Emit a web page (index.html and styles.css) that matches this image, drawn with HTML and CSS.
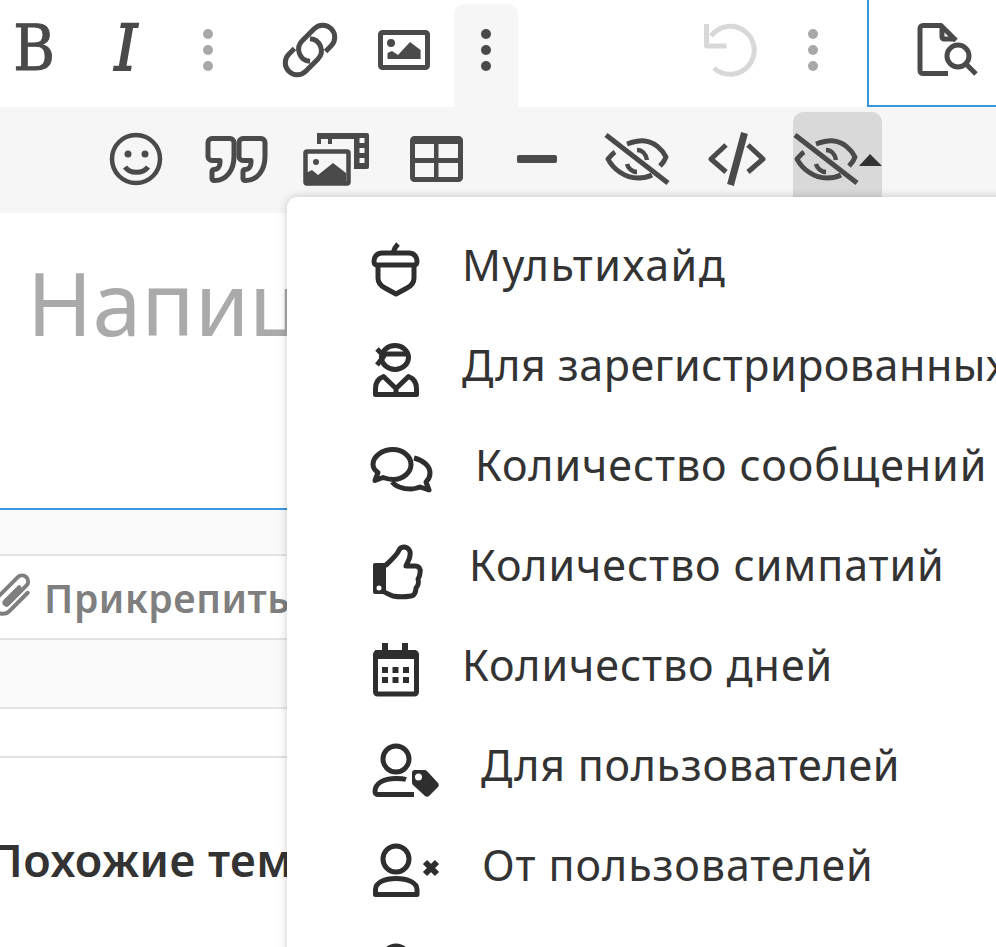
FILE: index.html
```html
<!DOCTYPE html>
<html lang="ru">
<head>
<meta charset="utf-8">
<title>Редактор</title>
<link rel="stylesheet" href="styles.css">
</head>
<body>

<div class="toolbar">
	<div class="tb tb-b"><span class="bold">B</span></div>
	<div class="tb tb-i"><span class="ital">I</span></div>
	<div class="tb tb-more1">
		<svg viewBox="177 18 64 64"><g class="dots"><circle cx="209" cy="34" r="5"/><circle cx="209" cy="50" r="5"/><circle cx="209" cy="66" r="5"/></g></svg>
	</div>
	<div class="tb tb-link">
		<svg viewBox="278 18 64 64"><g class="ln" transform="rotate(-45 310 50)"><path d="M300 38h-8a12 12 0 0 0 0 24h17a12 12 0 0 0 9-20"/><path d="M320 62h8a12 12 0 0 0 0-24h-17a12 12 0 0 0-9 20"/></g></svg>
	</div>
	<div class="tb tb-img">
		<svg viewBox="372 18 64 64"><rect class="ln" x="380.500" y="32.500" width="47" height="35" rx="2"/><circle class="fl" cx="391" cy="43" r="4"/><path class="fl" d="M387.500 59v-6l4.500-2 6 4 12-13 10.600 8v9z"/></svg>
	</div>
	<div class="tb tb-active">
		<svg viewBox="454 14 64 64"><g class="fl"><circle cx="486" cy="34" r="5"/><circle cx="486" cy="50" r="5"/><circle cx="486" cy="66" r="5"/></g></svg>
	</div>
	<div class="tb tb-undo">
		<svg viewBox="698 18 64 64"><g class="ln undo"><path d="M711 36A24 24 0 1 1 714 68"/><path d="M706.500 24v22h20" /></g></svg>
	</div>
	<div class="tb tb-more2">
		<svg viewBox="781 18 64 64"><g class="dots"><circle cx="813" cy="34" r="5"/><circle cx="813" cy="50" r="5"/><circle cx="813" cy="66" r="5"/></g></svg>
	</div>
	<div class="preview">
		<svg viewBox="909 18 76 64"><g class="ln"><path d="M948 73.500h-25a3 3 0 0 1-3-3v-42a3 3 0 0 1 3-3h18l15 15"/><path d="M942 26v11a2 2 0 0 0 2 2h11"/><circle cx="958" cy="56" r="11"/><path d="M966 64l10 10"/></g></svg>
	</div>
</div>

<div class="toolbar2">
	<div class="tb2">
		<svg viewBox="104 126 64 64"><circle class="ln thin" cx="136" cy="159" r="24"/><circle class="fl" cx="128" cy="154" r="3.500"/><circle class="fl" cx="145" cy="154" r="3.500"/><path class="ln" d="M125 167c5 7 18 7 23 0"/></svg>
	</div>
	<div class="tb2">
		<svg viewBox="204 126 64 64"><g class="ln"><path d="M212 138.500h18a4 4 0 0 1 4 4v14c0 14-8 24-19 24h-1a2 2 0 0 1-2-2v-7a2 2 0 0 1 2-2c4 0 6-3 6-7v-2h-8a4 4 0 0 1-4-4v-14a4 4 0 0 1 4-4z"/><path d="M243 138.500h18a4 4 0 0 1 4 4v14c0 14-8 24-19 24h-1a2 2 0 0 1-2-2v-7a2 2 0 0 1 2-2c4 0 6-3 6-7v-2h-8a4 4 0 0 1-4-4v-14a4 4 0 0 1 4-4z"/></g></svg>
	</div>
	<div class="tb2">
		<svg viewBox="304 126 64 64" class="over"><rect class="ln thin" x="305.500" y="151.500" width="43" height="32" rx="1.500"/><circle class="fl" cx="316" cy="162" r="3"/><path class="fl" d="M306 173l6-3 6 5 15-12 13 10v11h-40z"/><path class="fl" d="M317 133h50a2 2 0 0 1 2 2v32a2 2 0 0 1-2 2h-13v-4h0V139h-22v5h-4v-5h-7v5h-4z"/><path class="hole" d="M359.500 138h5v5h-5zM359.500 148h5v5h-5zM359.500 158h5v5h-5z"/></svg>
	</div>
	<div class="tb2">
		<svg viewBox="404 126 64 64"><rect class="ln" x="412.500" y="138.500" width="48" height="41" rx="2"/><path class="fl" d="M412 138h49v6h-49zM412 158h49v5h-49zM434 140h4.500v40H434z"/></svg>
	</div>
	<div class="tb2">
		<svg viewBox="504 126 64 64"><rect class="fl" x="517" y="155" width="40" height="8" rx="2"/></svg>
	</div>
	<div class="tb2">
		<svg viewBox="604 126 64 64" class="over"><use href="#eye"/></svg>
	</div>
	<div class="tb2">
		<svg viewBox="704 126 64 64"><path class="ln" d="M726 145l-15 14 15 13M748 145l15 14-15 13"/><path class="ln wide" d="M744.500 133l-14 52"/></svg>
	</div>
	<div class="tb2-active">
		<svg viewBox="793 112 89 74"><use href="#eye" x="189"/><path class="caret" d="M859 166l11-12 12 12z"/></svg>
	</div>
</div>

<svg class="defs">
	<symbol id="eye" overflow="visible">
		<g class="ln"><path d="M606 135l62 48"/><path d="M627 144c6-2 12-4 18-3 9 1 17 8 21 16-1 3-3 6-6 9"/><path d="M615 152c-3 2-5 5-7 7 5 10 17 19 30 19 5 0 10-1 14-3"/><path class="thin" d="M637 150c5 0 9 4 10 10M627 164c1 4 5 8 10 8"/></g>
	</symbol>
</svg>

<div class="editor">
	<div class="placeholder">Напишите ответ...</div>
</div>

<div class="bar"></div>

<div class="attach">
	<svg class="clip" viewBox="-4 570 44 52"><path transform="rotate(45 15 596)" d="M21 584v26a9 9 0 0 1-18 0V580a6 6 0 0 1 12 0v26a2 2 0 0 1-4 0v-20"/></svg>
	<span class="attach-text">Прикрепить файлы</span>
</div>

<div class="bar bar-big"></div>
<div class="blank"></div>

<h3 class="related">Похожие темы</h3>

<div class="menu">
	<div class="menu-row gap1 loose">
		<svg viewBox="368 237 76 60"><g class="mi"><path d="M396 253h13c5 0 8 4 8 8 0 3-1 4-3 4h-37c-2 0-3-1-3-4 0-4 3-8 8-8zM393 253c1-4 3-7 5-9"/><path d="M378 265v13c0 5 3 8 7 10l11 6 11-6c4-2 7-5 7-10v-13"/></g></svg>
		<span>Мультихайд</span>
	</div>
	<div class="menu-row gap1 tight">
		<svg viewBox="368 337 76 60"><g class="mi"><ellipse cx="395" cy="357.500" rx="13.500" ry="12"/><path d="M381 354h28M377 349l7 7-7 9"/><path d="M375.500 394.500v-6c0-6 3-10 8-12l12.500 12 12.500-12c5 2 8 6 8 12v6zM396 388v6"/></g></svg>
		<span>Для зарегистрированных</span>
	</div>
	<div class="menu-row gap3">
		<svg viewBox="368 437 76 60"><g class="mi"><path d="M393 449.500c10 0 18 7 18 15s-8 15-18 15c-4 0-7-1-10-2l-8 3 3-8c-3-2-5-5-5-8 0-8 9-15 20-15z"/><path d="M414 458c9 2 16 8 16 15 0 4-2 7-4 9l3 8-9-3c-3 1-6 2-9 2-8 0-15-2-19-7"/></g></svg>
		<span>Количество сообщений</span>
	</div>
	<div class="menu-row gap4">
		<svg viewBox="368 537 76 60"><path class="mf" d="M375 563h11v31h-11a2 2 0 0 1-2-2v-27a2 2 0 0 1 2-2z"/><circle class="hole" cx="379" cy="588" r="2.500"/><path class="mi" d="M385 566c5-5 10-9 13-14 2-4 3-5 6-5 4 0 7 4 6 8 0 4-3 8-4 11h9c4 0 6 3 5 7 0 3-1 4-2 6 1 3 0 7-2 9 0 4-2 8-5 8-6 1-13 1-18 0-4-1-6-3-9-4"/></svg>
		<span>Количество симпатий</span>
	</div>
	<div class="menu-row gap1">
		<svg viewBox="368 637 76 60"><rect class="mi" x="375.500" y="652.500" width="41" height="41.500" rx="2"/><path class="mf" d="M375 650h41v9h-41zM382 643h6v8h-6zM402 643h6v8h-6zM382 667h6v6h-6zM392.500 667h6v6h-6zM403 667h6v6h-6zM382 677h6v6h-6zM392.500 677h6v6h-6zM403 677h6v6h-6z"/></svg>
		<span>Количество дней</span>
	</div>
	<div class="menu-row gap5 snug">
		<svg viewBox="368 737 76 60"><g class="mi"><circle cx="396" cy="759" r="13"/><path d="M414 794.500h-36a3 3 0 0 1-3-3c0-8 8-13 21-13 3 0 7 0 10 1"/></g><path class="mf" d="M415 770h9c1 0 2 0 3 1l11 12c1 1 1 3 0 4l-9 9c-1 1-3 1-4 0l-12-11c-1-1-1-2-1-3v-9c0-2 1-3 3-3z"/><circle class="hole" cx="418.500" cy="777" r="3.500"/></svg>
		<span>Для пользователей</span>
	</div>
	<div class="menu-row gap6">
		<svg viewBox="368 837 76 60"><g class="mi"><circle cx="396" cy="859" r="13"/><path d="M375.500 894.500v-5c0-7 9-11 20.500-11s21 4 21 11v5z"/><path class="xm" d="M425 862l12 12M437 862l-12 12"/></g></svg>
		<span>От пользователей</span>
	</div>
	<div class="menu-row gap1">
		<svg viewBox="368 937 76 60"><g class="mi"><circle cx="396" cy="959" r="13"/></g></svg>
		<span></span>
	</div>
</div>

</body>
</html>
```

FILE: styles.css
```css
html, body {margin:0; padding:0; height:947px; overflow:hidden; background:#fff;}
body {position:relative; font-family:"Noto Sans","Open Sans",sans-serif; color:#333;}

svg {display:block; overflow:visible;}
.defs {width:0; height:0; position:absolute;}

.ln {fill:none; stroke:#4a4a4a; stroke-width:5; stroke-linejoin:round;}
.ln.thin, .ln .thin {stroke-width:4.500;}
.ln.wide {stroke-width:7;}
.ln.undo {stroke:#d8d8d8;}
.fl {fill:#4a4a4a;}
.dots {fill:#a8a8a8;}
.hole {fill:#f6f6f6;}
.menu .hole {fill:#fff;}
.caret {fill:#333;}

/* first row */
.toolbar {display:flex; height:107px; box-sizing:border-box;}
.tb {width:64px; padding-top:18px; box-sizing:border-box; display:flex; justify-content:center;}
.tb svg {width:64px; height:64px;}
.tb-b {width:68px; margin-right:26px; padding-top:17px;}
.tb-i {margin-right:18px; padding-top:17px;}
.tb-link {margin-left:38px;}
.tb-img {margin-left:30px; margin-right:18px;}
.tb-active {background:#f6f6f6; border-radius:10px 10px 0 0; margin-top:4px; padding-top:10px; height:103px;}
.tb-undo {margin-left:180px;}
.tb-more2 {margin-left:19px;}
.preview {margin-left:22px; flex:1; border-left:2px solid #3a96dd; border-bottom:2px solid #3a96dd; padding:18px 0 0 40px;}
.preview svg {width:76px; height:64px;}

.bold, .ital {font:400 63px/1 "DejaVu Serif",serif; color:#4a4a4a; font-stretch:condensed; -webkit-text-stroke:1px #4a4a4a;}
.ital {font-style:italic; -webkit-text-stroke:2px #4a4a4a;}

/* second row */
.toolbar2 {display:flex; height:106px; background:#f6f6f6; padding-left:104px; box-sizing:border-box; gap:36px;}
.tb2 {width:64px; padding-top:19px; box-sizing:border-box;}
.tb2 svg {width:64px; height:64px;}
.tb2-active {width:89px; height:85px; margin:5px 0 0 -11px; background:#d9d9d9; border-radius:10px 10px 0 0;}
.tb2-active svg {width:89px; height:74px;}

.editor {height:295px; border-bottom:2px solid #3a96dd; overflow:hidden;}
.placeholder {font-size:88px; line-height:130px; color:#aaa; margin:24px 0 0 27px; white-space:nowrap;}

.bar {height:44px; background:#fafafa; border-bottom:2px solid #e4e4e4;}
.bar-big {height:67px;}
.attach {height:82px; border-bottom:2px solid #e4e4e4; display:flex; align-items:center; color:#7f7f7f;}
.clip {width:44px; height:52px; margin-left:-4px; fill:none; stroke:#7f7f7f; stroke-width:4; stroke-linecap:round;}
.attach-text {font-size:39px; font-weight:600; letter-spacing:.6px; margin-left:4px; white-space:nowrap;}
.blank {height:47px; border-bottom:2px solid #e4e4e4;}
.related {margin:70px 0 0 -11px; font-size:45px; line-height:64px; font-weight:600; letter-spacing:.5px; white-space:nowrap;}

/* dropdown, lies over the page */
.menu {position:absolute; left:287px; top:197px; right:-20px; height:800px; box-sizing:border-box; padding:20px 0 0 81px; background:#fff; border-radius:10px 0 0 0; box-shadow:0 0 10px rgba(0,0,0,.2);}
.menu-row {display:flex; align-items:center; height:100px; font-size:43px; letter-spacing:.9px; white-space:nowrap;}
.menu-row.loose {letter-spacing:1.500px;}
.menu-row.tight {letter-spacing:.5px;}
.menu-row.snug {letter-spacing:.7px;}
.menu-row span {padding-bottom:6px;}
.menu-row svg {width:76px; height:60px; flex:none;}
.mi {fill:none; stroke:#2e2e2e; stroke-width:5; stroke-linejoin:round;}
.mf {fill:#2e2e2e;}
.xm {stroke-width:6;}
.gap1 span {margin-left:18px;}
.gap3 span {margin-left:31px;}
.gap4 span {margin-left:25px;}
.gap5 span {margin-left:37px;}
.gap6 span {margin-left:38px;}
```
